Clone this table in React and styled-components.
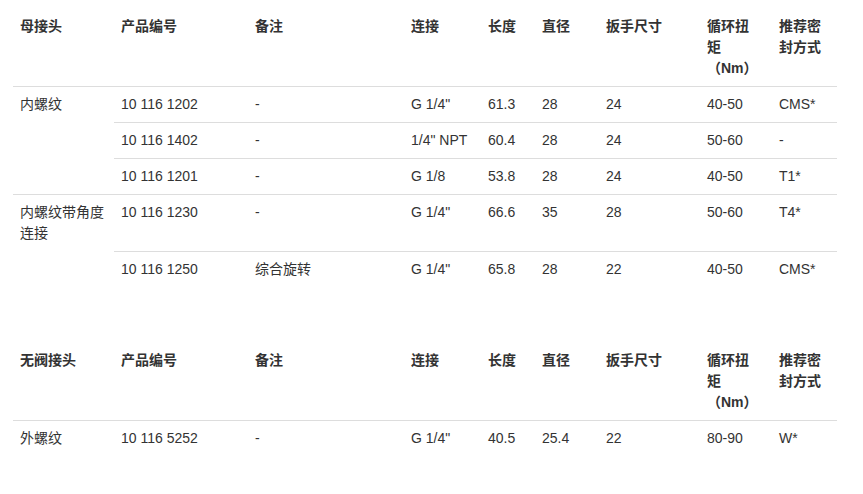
import React from 'react';
import styled, { createGlobalStyle } from 'styled-components';

const GlobalStyle = createGlobalStyle`
  body {
    margin: 0;
    background: #fff;
    font-family: "Liberation Sans", "Noto Sans CJK SC", sans-serif;
    color: #333;
  }
`;

const Page = styled.div`
  padding: 9px 26px 20px 13px;
  display: flex;
  flex-direction: column;
  gap: 56px;
`;

const Table = styled.table`
  width: 824px;
  border-collapse: collapse;
  table-layout: fixed;
  font-size: 14px;
  line-height: 21px;
`;

const HeadCell = styled.th`
  padding: 7px;
  text-align: left;
  vertical-align: top;
  font-weight: bold;
  color: #333;
`;

// group label cells only carry a rule on the first row of their group
const Cell = styled.td`
  padding: 7px;
  text-align: left;
  vertical-align: top;
  border-top: ${p => (p.$plain ? 'none' : '1px solid #dddddd')};
`;

// column widths measured from the grid lines
const widths = [101, 134, 156, 77, 54, 64, 101, 72, 65];

const headers = (first) => [
  first,
  '产品编号',
  '备注',
  '连接',
  '长度',
  '直径',
  '扳手尺寸',
  <>循环扭<br />矩<br />（Nm）</>,
  '推荐密封方式',
];

function SpecTable({ title, groups }) {
  return (
    <Table>
      <colgroup>
        {widths.map((w, i) => <col key={i} style={{ width: w }} />)}
      </colgroup>
      <thead>
        <tr>
          {headers(title).map((h, i) => <HeadCell key={i}>{h}</HeadCell>)}
        </tr>
      </thead>
      <tbody>
        {groups.map((g) =>
          g.rows.map((r, ri) => (
            <tr key={g.name + ri}>
              <Cell $plain={ri > 0}>{ri === 0 ? g.name : ''}</Cell>
              {r.map((v, ci) => <Cell key={ci}>{v}</Cell>)}
            </tr>
          ))
        )}
      </tbody>
    </Table>
  );
}

const femaleGroups = [
  {
    name: '内螺纹',
    rows: [
      ['10 116 1202', '-', 'G 1/4"', '61.3', '28', '24', '40-50', 'CMS*'],
      ['10 116 1402', '-', '1/4" NPT', '60.4', '28', '24', '50-60', '-'],
      ['10 116 1201', '-', 'G 1/8', '53.8', '28', '24', '40-50', 'T1*'],
    ],
  },
  {
    name: '内螺纹带角度连接',
    rows: [
      ['10 116 1230', '-', 'G 1/4"', '66.6', '35', '28', '50-60', 'T4*'],
      ['10 116 1250', '综合旋转', 'G 1/4"', '65.8', '28', '22', '40-50', 'CMS*'],
    ],
  },
];

const valvelessGroups = [
  {
    name: '外螺纹',
    rows: [
      ['10 116 5252', '-', 'G 1/4"', '40.5', '25.4', '22', '80-90', 'W*'],
    ],
  },
];

export default function App() {
  return (
    <>
      <GlobalStyle />
      <Page>
        <SpecTable title="母接头" groups={femaleGroups} />
        <SpecTable title="无阀接头" groups={valvelessGroups} />
      </Page>
    </>
  );
}
